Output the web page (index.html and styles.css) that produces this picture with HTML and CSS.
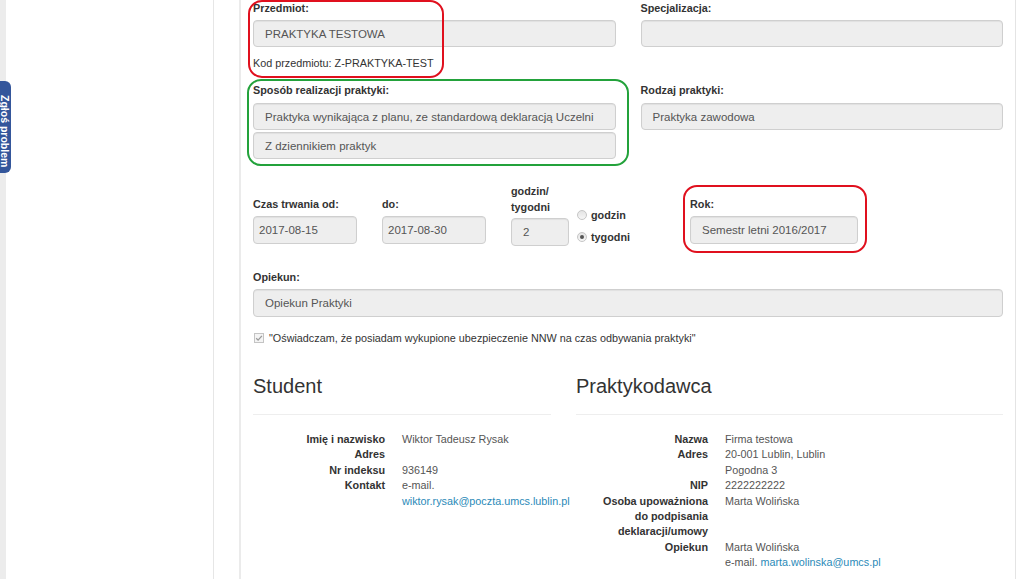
FILE: index.html
```html
<!DOCTYPE html>
<html lang="pl">
<head>
<meta charset="utf-8">
<title>Praktyka</title>
<link rel="stylesheet" href="styles.css">
</head>
<body>
<div class="page">
  <div class="rail"></div>
  <aside class="sidebar"></aside>
  <div class="spacer"></div>
  <main class="panel">
    <div class="grid2">
      <div class="cell">
        <div class="label">Przedmiot:</div>
        <div class="field">PRAKTYKA TESTOWA</div>
        <div class="code">Kod przedmiotu: Z-PRAKTYKA-TEST</div>
      </div>
      <div class="cell">
        <div class="label">Specjalizacja:</div>
        <div class="field"></div>
      </div>
    </div>

    <div class="grid2 rowb">
      <div class="cell">
        <div class="label">Sposób realizacji praktyki:</div>
        <div class="field mt6">Praktyka wynikająca z planu, ze standardową deklaracją Uczelni</div>
        <div class="field mt2">Z dziennikiem praktyk</div>
      </div>
      <div class="cell">
        <div class="label">Rodzaj praktyki:</div>
        <div class="field mt6">Praktyka zawodowa</div>
      </div>
    </div>

    <div class="rowc">
      <div class="item w104">
        <div class="label">Czas trwania od:</div>
        <div class="field tall date">2017-08-15</div>
      </div>
      <div class="item w104 ml25">
        <div class="label">do:</div>
        <div class="field tall date">2017-08-30</div>
      </div>
      <div class="item hours ml25">
        <div class="label two">godzin/<br>tygodni</div>
        <div class="field tall">2</div>
      </div>
      <div class="radios">
        <div class="radio"><span class="dot"></span>godzin</div>
        <div class="radio"><span class="dot on"></span>tygodni</div>
      </div>
      <div class="item year">
        <div class="label">Rok:</div>
        <div class="field tall">Semestr letni 2016/2017</div>
      </div>
    </div>

    <div class="rowd">
      <div class="label">Opiekun:</div>
      <div class="field tall">Opiekun Praktyki</div>
    </div>

    <div class="rowe">
      <span class="check"><svg width="10" height="10" viewBox="0 0 10 10"><rect x="0.5" y="0.5" width="9" height="9" fill="#f4f4f4" stroke="#c4c4c4"/><path d="M2.2 5.2 L4.1 7.1 L7.9 2.9" fill="none" stroke="#9a9a9a" stroke-width="1.3"/></svg></span>
      <span>"Oświadczam, że posiadam wykupione ubezpieczenie NNW na czas odbywania praktyki"</span>
    </div>

    <div class="parties">
      <section class="party student">
        <h3>Student</h3>
        <dl>
          <dt>Imię i nazwisko</dt><dd>Wiktor Tadeusz Rysak</dd>
          <dt>Adres</dt><dd></dd>
          <dt>Nr indeksu</dt><dd>936149</dd>
          <dt>Kontakt</dt><dd>e-mail.<br><a href="#">wiktor.rysak@poczta.umcs.lublin.pl</a></dd>
        </dl>
      </section>
      <section class="party employer">
        <h3>Praktykodawca</h3>
        <dl>
          <dt>Nazwa</dt><dd>Firma testowa</dd>
          <dt>Adres</dt><dd>20-001 Lublin, Lublin<br>Pogodna 3</dd>
          <dt>NIP</dt><dd>2222222222</dd>
          <dt>Osoba upoważniona<br>do podpisania<br>deklaracji/umowy</dt><dd>Marta Wolińska</dd>
          <dt>Opiekun</dt><dd>Marta Wolińska<br>e-mail. <a href="#">marta.wolinska@umcs.pl</a></dd>
        </dl>
      </section>
    </div>
  </main>
</div>

<div class="report-tab"><span>Zgłoś problem</span></div>

<div class="mark red m1"></div>
<div class="mark green m2"></div>
<div class="mark red m3"></div>
</body>
</html>
```

FILE: styles.css
```css
* { box-sizing: border-box; }
html, body { margin: 0; padding: 0; }
body {
  font-family: "Liberation Sans", Arial, sans-serif;
  font-size: 10.8px;
  color: #333;
  background: #fff;
  position: relative;
  width: 1024px;
  height: 579px;
  overflow: hidden;
}
.page { display: flex; align-items: stretch; height: 579px; }
.rail { width: 6px; background: #ececec; flex: none; }
.sidebar { width: 208px; flex: none; border-right: 1px solid #e6e6e6; }
.spacer { width: 25px; flex: none; }
.panel {
  width: 777px;
  flex: none;
  border-left: 2px solid #ebebeb;
  border-right: 1px solid #e4e4e4;
  padding: 1px 12px 0 12px;
}

.label { font-weight: bold; line-height: 14px; color: #333; white-space: nowrap; }
.field {
  height: 27px;
  margin-top: 5px;
  border: 1px solid #cfcfcf;
  border-radius: 4px;
  background: #eeeeee;
  box-shadow: inset 0 1px 1px rgba(0,0,0,.06);
  color: #555;
  font-size: 11.5px;
  padding: 0 11px;
  display: flex;
  align-items: center;
  white-space: nowrap;
}
.field.tall { height: 28px; }
.field.date { padding-left: 5px; }
.mt6 { margin-top: 6px; }
.mt2 { margin-top: 2px; }

.grid2 { display: grid; grid-template-columns: 1fr 1fr; column-gap: 25px; }
.code { margin-top: 9px; line-height: 14px; }
.rowb { margin-top: 13px; }

.rowc { display: flex; align-items: flex-start; margin-top: 24px; height: 63px; }
.item { padding-top: 14px; }
.w104 { width: 104px; }
.ml25 { margin-left: 25px; }
.hours { width: 58px; padding-top: 0; }
.hours .label.two { line-height: 16px; }
.hours .field { margin-top: 3px; }
.radios { margin-left: 8px; padding-top: 21px; width: 60px; }
.radio { line-height: 22px; font-weight: bold; display: flex; align-items: center; white-space: nowrap; }
.dot {
  width: 10px; height: 10px; border-radius: 50%;
  border: 1px solid #c6c6c6;
  background: linear-gradient(#e4e4e4, #f6f6f6);
  margin-right: 4px;
  position: relative;
  flex: none;
}
.dot.on::after {
  content: "";
  position: absolute;
  left: 2px; top: 2px;
  width: 4px; height: 4px;
  border-radius: 50%;
  background: #555;
}
.year { margin-left: 53px; width: 168px; }

.rowd { margin-top: 24px; }
.rowe { margin-top: 14px; display: flex; align-items: center; line-height: 14px; padding-left: 1px; }
.check { width: 10px; height: 10px; margin-right: 5px; display: flex; }

.parties { display: flex; margin-top: 30px; }
.party.student { width: 298px; }
.party.employer { width: 427px; margin-left: 25px; }
.party h3 {
  margin: 0;
  font-size: 20px;
  font-weight: normal;
  line-height: 22px;
  color: #333;
  padding-bottom: 17px;
  border-bottom: 1px solid #eeeeee;
}
dl {
  margin: 17px 0 0 0;
  display: grid;
  grid-template-columns: 132px 1fr;
  column-gap: 17px;
  line-height: 15.4px;
}
dt { font-weight: bold; text-align: right; color: #333; }
dd { margin: 0; color: #555; }
a { color: #2a8ab8; text-decoration: none; }

.report-tab {
  position: absolute;
  left: 0; top: 81px;
  width: 11px; height: 92px;
  background: #34569b;
  border-radius: 0 6px 6px 0;
  overflow: hidden;
  padding-top: 14px;
}
.report-tab span {
  display: block;
  writing-mode: vertical-rl;
  font-weight: bold;
  font-size: 10.5px;
  line-height: 14px;
  width: 14px;
  margin-left: -2.5px;
  color: #fff;
  white-space: nowrap;
}

.mark { position: absolute; border: 2px solid; border-radius: 14px; }
.mark.red { border-color: #e0101e; }
.mark.green { border-color: #23a23b; }
.m1 { left: 248px; top: 0; width: 196px; height: 78px; }
.m2 { left: 247px; top: 79px; width: 382px; height: 87px; }
.m3 { left: 683px; top: 185px; width: 184px; height: 68px; }
```
